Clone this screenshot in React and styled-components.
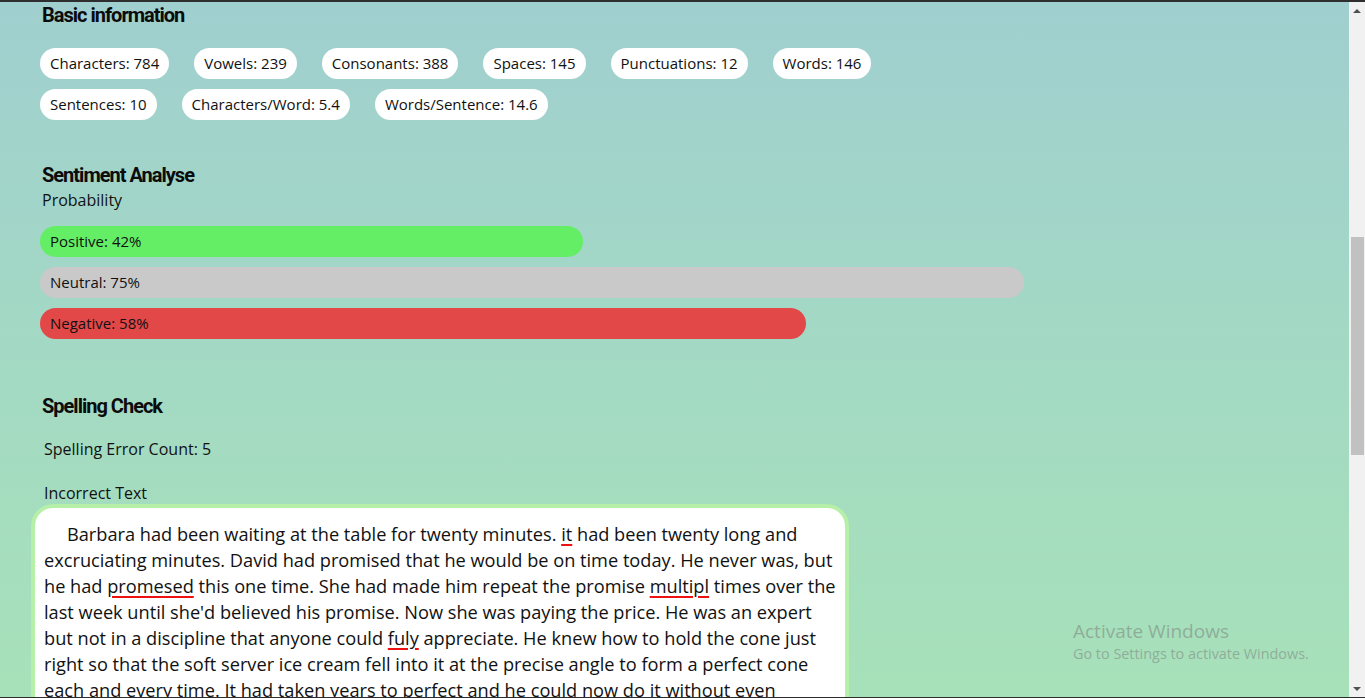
import React from 'react';
import styled, { createGlobalStyle } from 'styled-components';

const GlobalStyle = createGlobalStyle`
  html, body {
    margin: 0;
    padding: 0;
    overflow: hidden;
  }
  body {
    font-family: 'Open Sans', 'Noto Sans', sans-serif;
    color: #111;
  }
`;

const Analysis = () => {
  const stats = [
    ['Characters', 784],
    ['Vowels', 239],
    ['Consonants', 388],
    ['Spaces', 145],
    ['Punctuations', 12],
    ['Words', 146],
    ['Sentences', 10],
    ['Characters/Word', 5.4],
    ['Words/Sentence', 14.6],
  ];

  const sentiment = [
    { id: 1, label: 'Positive', value: 42, width: 543, color: '#63ee66' },
    { id: 2, label: 'Neutral', value: 75, width: 984, color: '#c9c9c9' },
    { id: 3, label: 'Negative', value: 58, width: 766, color: '#e34848' },
  ];

  const text = [
    'Barbara had been waiting at the table for twenty minutes. ',
    { bad: 'it' },
    ' had been twenty long and excruciating minutes. David had promised that he would be on time today. He never was, but he had ',
    { bad: 'promesed' },
    ' this one time. She had made him repeat the promise ',
    { bad: 'multipl' },
    " times over the last week until she'd believed his promise. Now she was paying the price. He was an expert but not in a discipline that anyone could ",
    { bad: 'fuly' },
    ' appreciate. He knew how to hold the cone just right so that the soft server ice cream fell into it at the precise angle to form a perfect cone each and every time. It had taken years to perfect and he could now do it without even thinking about it. Anyone watching him would be ',
    { bad: 'amazd' },
    ' at the skill.',
  ];

  return (
    <Frame>
      <GlobalStyle />
      <Page>
        <Section>
          <Heading>Basic information</Heading>
          <ChipList>
            {stats.map(([name, value]) => (
              <Chip key={name}>
                {name}: {value}
              </Chip>
            ))}
          </ChipList>
        </Section>

        <Section $top={42}>
          <Heading>Sentiment Analyse</Heading>
          <SubLabel>Probability</SubLabel>
          <BarList>
            {sentiment.map((item) => (
              <Bar key={item.id} $color={item.color} style={{ width: item.width }}>
                {item.label}: {item.value}%
              </Bar>
            ))}
          </BarList>
        </Section>

        <Section $top={54}>
          <Heading>Spelling Check</Heading>
          <Info $top={19}>Spelling Error Count: 5</Info>
          <Info $top={22}>Incorrect Text</Info>
          <TextBox>
            <Paragraph>
              {text.map((part, index) =>
                typeof part === 'string' ? (
                  <span key={index}>{part}</span>
                ) : (
                  <Misspelled key={index}>{part.bad}</Misspelled>
                )
              )}
            </Paragraph>
          </TextBox>
        </Section>

        <Watermark>
          <WatermarkTitle>Activate Windows</WatermarkTitle>
          <WatermarkText>Go to Settings to activate Windows.</WatermarkText>
        </Watermark>
      </Page>

      <Scrollbar>
        <Arrow $up />
        <Track>
          <Thumb />
        </Track>
        <Arrow />
      </Scrollbar>
    </Frame>
  );
};

export default Analysis;

const Frame = styled.div`
  display: flex;
  width: 1365px;
  height: 698px;
  box-sizing: border-box;
  border-top: 2px solid #2e2e2e;
  border-bottom: 1px solid #2e2e2e;
  overflow: hidden;
`;

const Page = styled.div`
  position: relative;
  flex: 1;
  padding: 0 0 0 40px;
  background: linear-gradient(180deg, #a0cfcf 0%, #a3d9c4 50%, #a7e1b9 100%);
  overflow: hidden;
`;

const Section = styled.section`
  display: flex;
  flex-direction: column;
  align-items: flex-start;
  margin-top: ${(p) => p.$top || 0}px;
`;

const Heading = styled.h2`
  margin: 0 0 0 2px;
  font-family: Roboto, 'Liberation Sans', sans-serif;
  font-weight: 700;
  font-size: 20px;
  letter-spacing: -1px;
  line-height: 26px;
  color: #0c0c0c;
`;

const ChipList = styled.div`
  display: flex;
  flex-wrap: wrap;
  gap: 10px 25px;
  margin-top: 20px;
  max-width: 900px;
`;

const Chip = styled.div`
  height: 31px;
  line-height: 31px;
  padding: 0 10px;
  border-radius: 16px;
  background: #ffffff;
  font-size: 15px;
  color: #111;
`;

const SubLabel = styled.div`
  margin: 1px 0 0 2px;
  font-size: 16px;
  line-height: 22px;
`;

const BarList = styled.div`
  display: flex;
  flex-direction: column;
  gap: 10px;
  margin-top: 15px;
`;

const Bar = styled.div`
  box-sizing: border-box;
  height: 31px;
  line-height: 31px;
  padding: 0 10px;
  border-radius: 16px;
  background: ${(p) => p.$color};
  font-size: 15px;
  color: #111;
`;

const Info = styled.div`
  margin: ${(p) => p.$top}px 0 0 4px;
  font-size: 16px;
  line-height: 22px;
`;

const TextBox = styled.div`
  margin: 0 0 0 -9px;
  width: 818px;
  box-sizing: border-box;
  background: #ffffff;
  border: 4px solid #b6efa8;
  border-radius: 22px;
  padding: 13px 5px 10px 9px;
`;

const Paragraph = styled.p`
  margin: 0;
  text-indent: 23px;
  font-size: 18.2px;
  line-height: 26px;
  color: #111;
`;

const Misspelled = styled.span`
  text-decoration: underline;
  text-decoration-color: #ee1111;
  text-decoration-thickness: 2px;
  text-underline-offset: 3px;
`;

const Watermark = styled.div`
  position: absolute;
  left: 1073px;
  top: 616px;
  font-family: 'Open Sans', 'Noto Sans', sans-serif;
  color: rgba(120, 120, 120, 0.5);
`;

const WatermarkTitle = styled.div`
  font-size: 19px;
  line-height: 26px;
`;

const WatermarkText = styled.div`
  font-size: 14.4px;
  line-height: 20px;
`;

const Scrollbar = styled.div`
  display: flex;
  flex-direction: column;
  width: 16px;
  background: #f1f1f1;
`;

const Arrow = styled.div`
  height: 17px;
  display: flex;
  align-items: center;
  justify-content: center;
  &::before {
    content: '';
    border-left: 4px solid transparent;
    border-right: 4px solid transparent;
    ${(p) =>
      p.$up
        ? 'border-bottom: 4px solid #505050;'
        : 'border-top: 4px solid #505050;'}
  }
`;

const Track = styled.div`
  flex: 1;
  padding: 218px 1px 0 2px;
`;

const Thumb = styled.div`
  height: 218px;
  background: #c1c1c1;
`;
